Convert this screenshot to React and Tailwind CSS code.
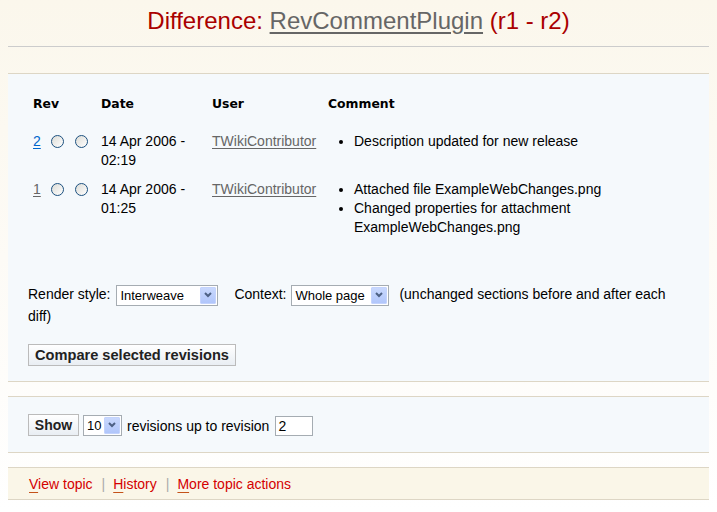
import React from 'react';

function Radio() {
  return (
    <span className="inline-block w-[13px] h-[13px] rounded-full border border-[#1c5180] bg-gradient-to-br from-[#dcdcd6] to-[#ffffff] align-[-2px]" />
  );
}

function FakeSelect({ value, width }) {
  return (
    <span
      className={`inline-flex items-center justify-between h-[21px] border border-[#a5acb2] bg-white pl-[3px] pr-[1px] align-middle ${width}`}
    >
      <span className="text-[13px] leading-none text-black">{value}</span>
      <span className="w-[16px] h-[17px] flex items-center justify-center bg-gradient-to-b from-[#c8d8fd] to-[#b1c6fb] border border-[#c3d3fd] rounded-[1px]">
        <svg width="8" height="6" viewBox="0 0 8 6">
          <path d="M1 1 L4 4 L7 1" stroke="#4d6185" strokeWidth="2" fill="none" />
        </svg>
      </span>
    </span>
  );
}

function AccessLink({ first, rest }) {
  return (
    <a className="text-[#d40000] no-underline">
      <span className="underline decoration-[#c4521a] underline-offset-[3px]">{first}</span>
      {rest}
    </a>
  );
}

const rows = [
  {
    rev: '2',
    revColor: 'text-[#06c] decoration-[#06c]',
    date: ['14 Apr 2006 -', '02:19'],
    comments: ['Description updated for new release'],
  },
  {
    rev: '1',
    revColor: 'text-[#666] decoration-[#666]',
    date: ['14 Apr 2006 -', '01:25'],
    comments: ['Attached file ExampleWebChanges.png', 'Changed properties for attachment ExampleWebChanges.png'],
  },
];

export default function App() {
  return (
    <div className="min-h-[512px] bg-gradient-to-b from-[#fbf7ec] via-[#fdfbf6] to-white font-['Liberation_Sans',Arial,sans-serif] text-[14px] text-black">
      <div className="mx-[8px]">
        {/* title */}
        <div className="h-[47px] border-b border-[#cccccc] pt-[6px] text-center">
          <h1 className="text-[24px] leading-[30px] text-[#aa0000]">
            Difference: <a className="text-[#666] underline decoration-[#666] underline-offset-[3px]">RevCommentPlugin</a> (r1 - r2)
          </h1>
        </div>

        {/* revision table */}
        <div className="mt-[26px] border-t border-b border-[#ddd6c5] bg-[#f5f9fc] px-[20px] pt-[15px] pb-[15px]">
          <table className="border-collapse leading-[19px]">
            <thead>
              <tr className="text-left font-['DejaVu_Sans',Verdana,sans-serif] text-[12.4px] font-bold">
                <th className="w-[68px] px-[5px] pt-[5px] pb-[14px] font-bold">Rev</th>
                <th className="w-[111px] px-[5px] pt-[5px] pb-[14px] font-bold">Date</th>
                <th className="w-[116px] px-[5px] pt-[5px] pb-[14px] font-bold">User</th>
                <th className="w-[300px] px-[5px] pt-[5px] pb-[14px] font-bold">Comment</th>
              </tr>
            </thead>
            <tbody>
              {rows.map((r) => (
                <tr key={r.rev} className="align-top">
                  <td className="px-[5px] py-[5px]">
                    <span className="flex items-center gap-[10px] h-[19px]">
                      <a className={`underline underline-offset-[2px] ${r.revColor}`}>{r.rev}</a>
                      <span className="flex gap-[11px]">
                        <Radio />
                        <Radio />
                      </span>
                    </span>
                  </td>
                  <td className="px-[5px] py-[5px]">
                    {r.date[0]}
                    <br />
                    {r.date[1]}
                  </td>
                  <td className="px-[5px] py-[5px]">
                    <a className="text-[#666] underline decoration-[#666] underline-offset-[2px]">TWikiContributor</a>
                  </td>
                  <td className="px-[5px] py-[5px]">
                    <ul className="list-disc pl-[26px]">
                      {r.comments.map((c) => (
                        <li key={c}>{c}</li>
                      ))}
                    </ul>
                  </td>
                </tr>
              ))}
            </tbody>
          </table>

          <p className="mt-[42px] leading-[21px]">
            <span>Render style:</span> <FakeSelect value="Interweave" width="ml-[2px] w-[102px]" />
            <span className="ml-[16px]">Context:</span> <FakeSelect value="Whole page" width="ml-[1px] w-[98px]" />
            <span className="ml-[10px]">(unchanged sections before and after each</span> <span>diff)</span>
          </p>

          <button className="mt-[17px] h-[22px] w-[208px] border border-[#bbbbbb] bg-gradient-to-b from-[#ffffff] to-[#e9eef3] text-[14.6px] font-bold text-[#222]">
            Compare selected revisions
          </button>
        </div>

        {/* show revisions */}
        <div className="mt-[14px] border-t border-b border-[#ddd6c5] bg-[#f5f9fc] px-[20px] pt-[17px] pb-[15px]">
          <div className="flex items-center gap-[4px]">
            <button className="h-[22px] w-[51px] border border-[#bbbbbb] bg-gradient-to-b from-[#ffffff] to-[#e9eef3] text-[14px] font-bold text-[#222]">
              Show
            </button>
            <FakeSelect value="10" width="w-[39px]" />
            <span className="ml-[1px] mt-[2px]">revisions up to revision</span>
            <span className="ml-[2px] mt-[2px] h-[20px] w-[38px] border border-[#a5acb2] bg-white pl-[2px] text-[14px] leading-[18px]">2</span>
          </div>
        </div>

        {/* footer actions */}
        <div className="mt-[14px] border-t border-b border-[#ddd6c5] bg-[#faf6e8] px-[21px] pt-[7px] pb-[5px] leading-[19px]">
          <AccessLink first="V" rest="iew topic" />
          <span className="ml-[9px] mr-[8px] text-[#aaa]">|</span>
          <AccessLink first="H" rest="istory" />
          <span className="ml-[9px] mr-[8px] text-[#aaa]">|</span>
          <AccessLink first="M" rest="ore topic actions" />
        </div>
      </div>
    </div>
  );
}
